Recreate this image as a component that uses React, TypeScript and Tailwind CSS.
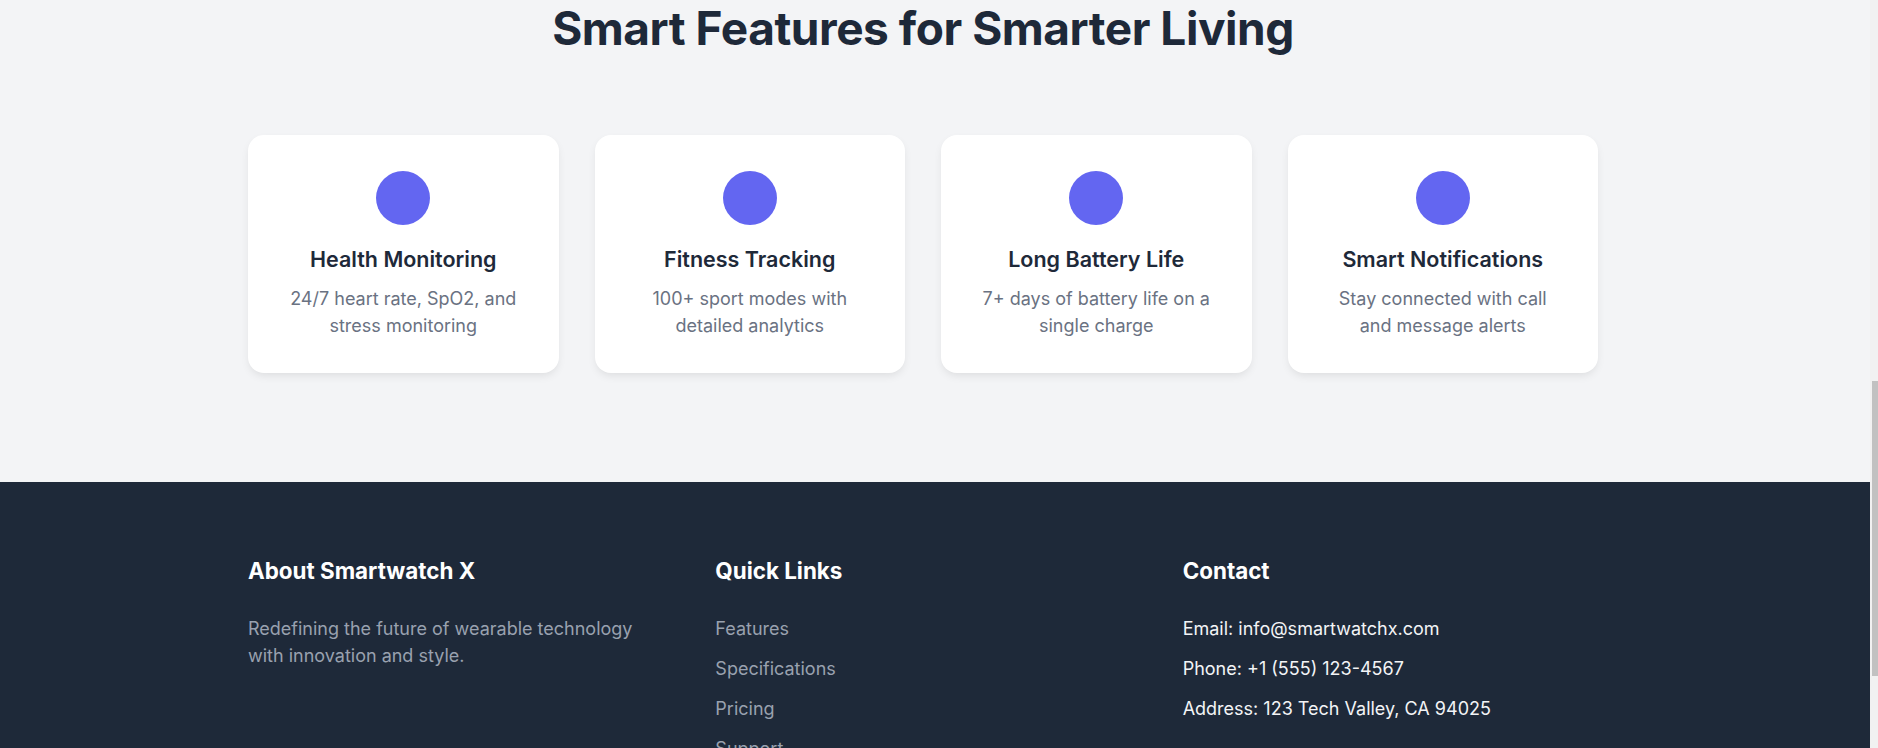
const features = [
  {
    title: "Health Monitoring",
    text: "24/7 heart rate, SpO2, and stress monitoring",
  },
  {
    title: "Fitness Tracking",
    text: "100+ sport modes with detailed analytics",
  },
  {
    title: "Long Battery Life",
    text: "7+ days of battery life on a single charge",
  },
  {
    title: "Smart Notifications",
    text: "Stay connected with call and message alerts",
  },
];

const quickLinks = ["Features", "Specifications", "Pricing", "Support"];

const contact = [
  "Email: info@smartwatchx.com",
  "Phone: +1 (555) 123-4567",
  "Address: 123 Tech Valley, CA 94025",
];

function FeatureCard({ title, text }: { title: string; text: string }) {
  return (
    <div className="flex flex-col items-center rounded-2xl bg-white px-[36px] pt-[36px] pb-[34px] text-center shadow-[0_4px_10px_-2px_rgba(0,0,0,0.1)]">
      <div className="h-[54px] w-[54px] rounded-full bg-[#6366f1]" />
      <h3 className="mt-5 text-[21.5px] font-semibold leading-[28px] text-gray-800">
        {title}
      </h3>
      <p className="mt-[12px] text-[18px] leading-[27px] text-gray-500">
        {text}
      </p>
    </div>
  );
}

export default function App() {
  return (
    <div className="flex h-[748px] overflow-hidden bg-gray-100 font-['Inter',sans-serif]">
      <main className="flex-1 pr-[24px]">
        <section className="pb-[109px]">
          <div className="mx-auto max-w-[1350px]">
            <h2 className="text-center text-[46px] font-bold leading-[56px] tracking-[-0.01em] text-gray-800">
              Smart Features for Smarter Living
            </h2>
            <div className="mt-[79px] grid grid-cols-4 gap-9">
              {features.map((f) => (
                <FeatureCard key={f.title} title={f.title} text={f.text} />
              ))}
            </div>
          </div>
        </section>

        <footer className="-mr-[24px] bg-gray-800 pr-[24px] pt-[75px] pb-10">
          <div className="mx-auto grid max-w-[1350px] grid-cols-3 gap-[52px]">
            <div>
              <h4 className="text-[22.4px] font-bold leading-[28px] text-white">
                About Smartwatch X
              </h4>
              <p className="mt-[30px] text-[18px] leading-[27px] text-gray-400">
                Redefining the future of wearable technology with innovation
                and style.
              </p>
            </div>
            <div>
              <h4 className="text-[22.4px] font-bold leading-[28px] text-white">
                Quick Links
              </h4>
              <ul className="mt-[30px] flex flex-col gap-[13px]">
                {quickLinks.map((l) => (
                  <li key={l}>
                    <a className="text-[18px] leading-[27px] text-gray-400">
                      {l}
                    </a>
                  </li>
                ))}
              </ul>
            </div>
            <div>
              <h4 className="text-[22.4px] font-bold leading-[28px] text-white">
                Contact
              </h4>
              <ul className="mt-[30px] flex flex-col gap-[13px]">
                {contact.map((c) => (
                  <li key={c} className="text-[18px] leading-[27px] text-gray-100">
                    {c}
                  </li>
                ))}
              </ul>
            </div>
          </div>
        </footer>
      </main>

      {/* page scrollbar */}
      <aside className="w-2 shrink-0 bg-[#f1f1f1] pt-[381px]">
        <div className="ml-[2px] h-[295px] w-[6px] bg-[#c1c1c1]" />
      </aside>
    </div>
  );
}
